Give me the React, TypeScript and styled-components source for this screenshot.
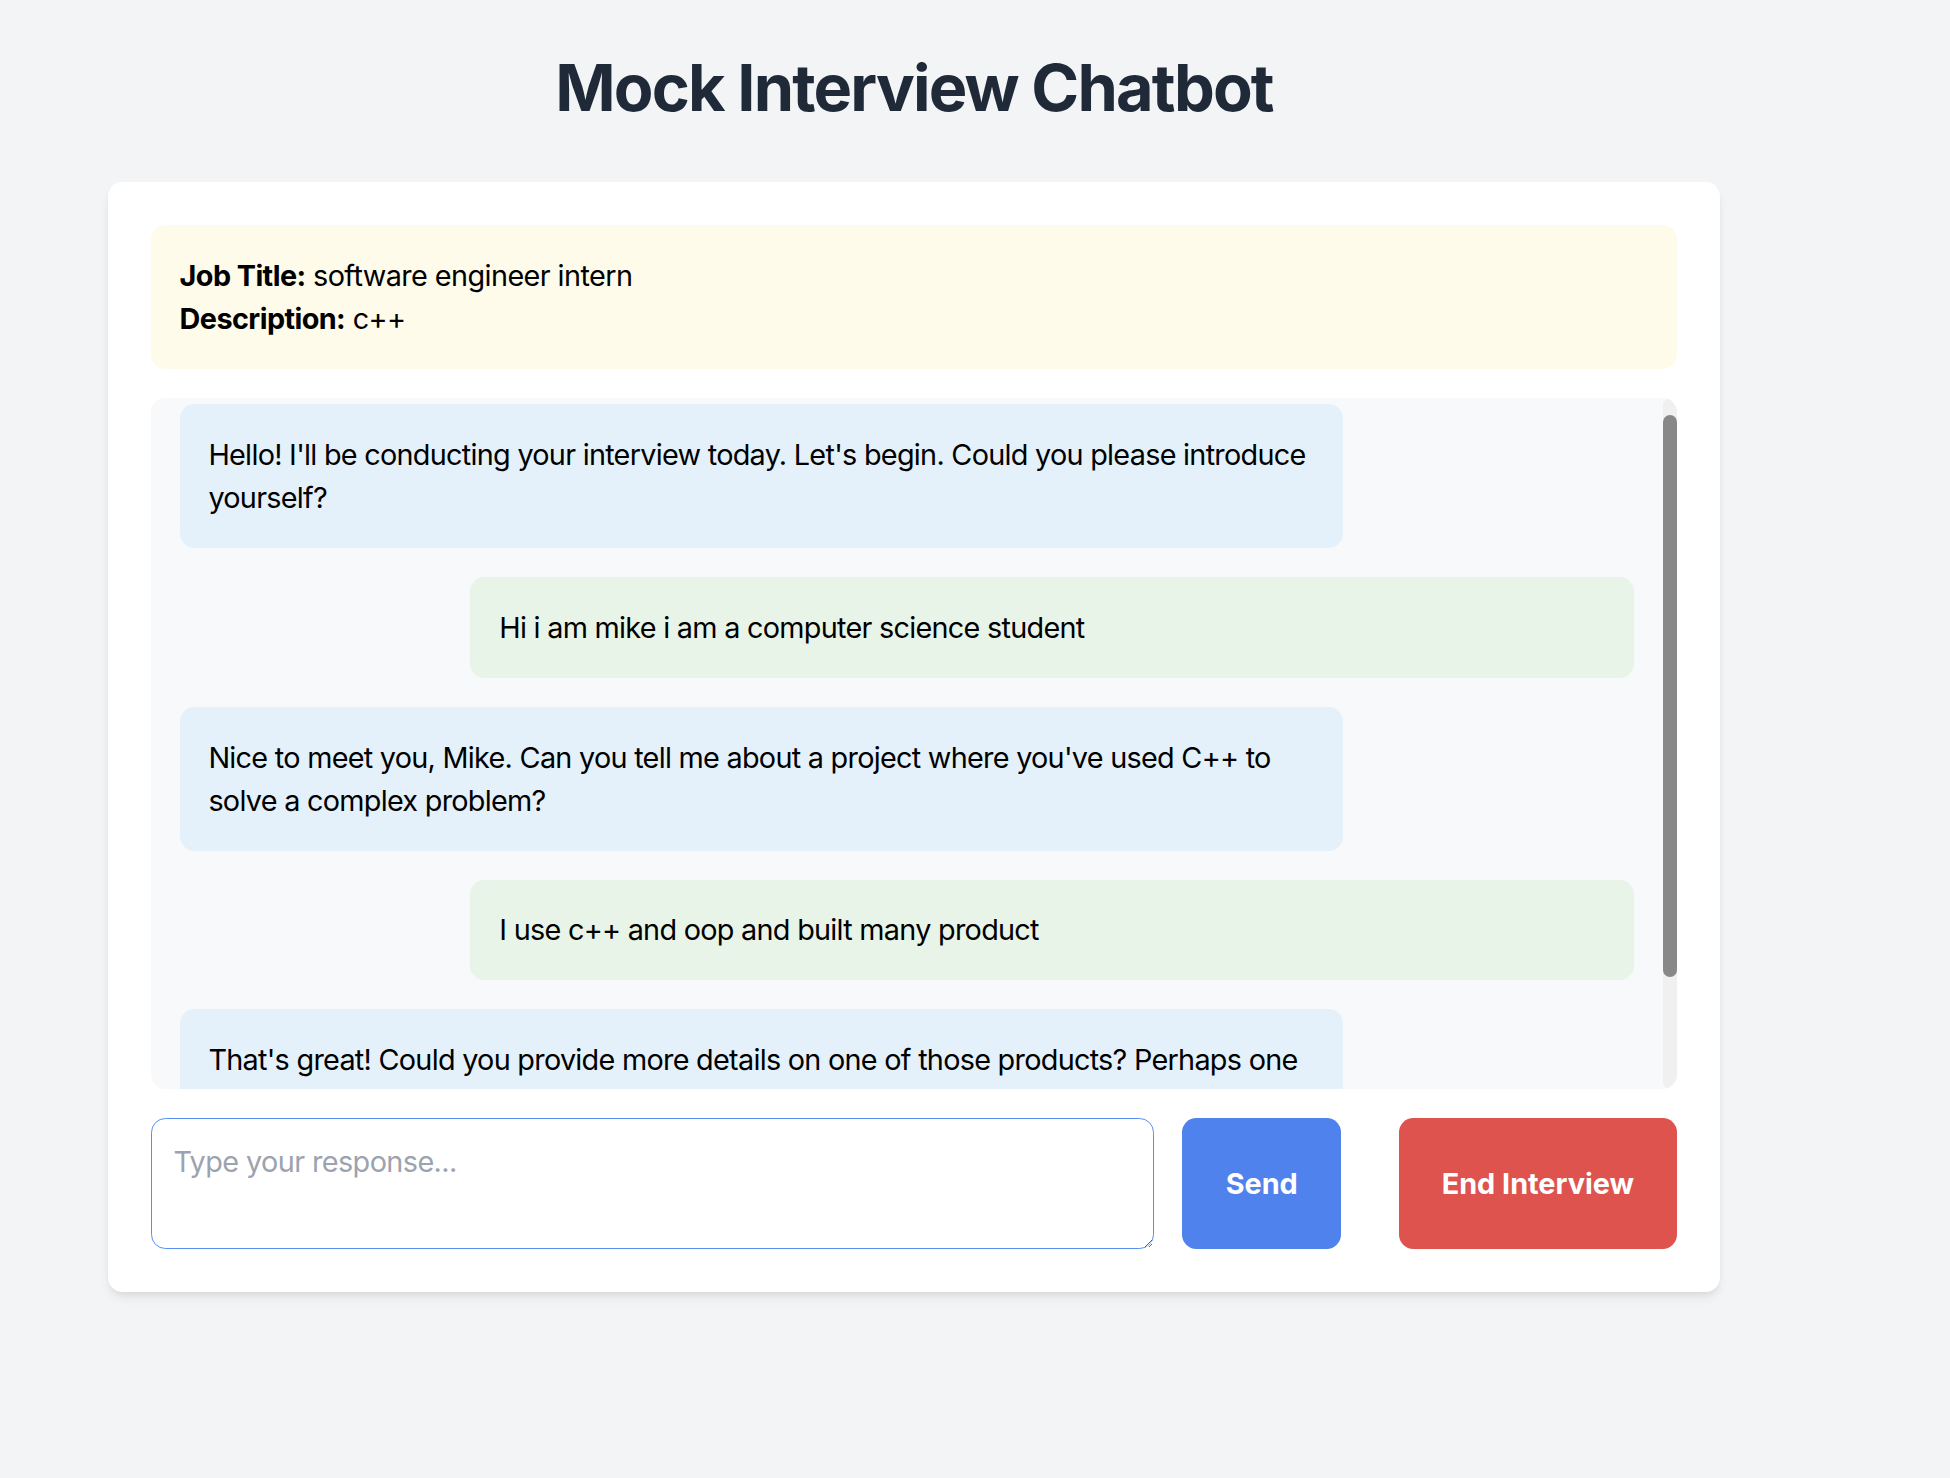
import React, { useLayoutEffect, useRef, useState } from "react";
import styled, { createGlobalStyle } from "styled-components";

const Global = createGlobalStyle`
  html, body {
    margin: 0;
    padding: 0;
    background: #f3f4f6;
    font-family: Inter, "Noto Sans", "Liberation Sans", sans-serif;
    color: #000;
  }
  * { box-sizing: border-box; }
`;

const Page = styled.div`
  width: 1828px;
  min-height: 1478px;
  padding-top: 52px;
  display: flex;
  flex-direction: column;
  align-items: center;
`;

const Title = styled.h1`
  margin: 0 0 57.6px 0;
  font-size: 64.8px;
  line-height: 72px;
  font-weight: 700;
  letter-spacing: -0.028em;
  color: #1f2937;
  text-align: center;
`;

const Card = styled.div`
  width: 1612.8px;
  background: #ffffff;
  border-radius: 14.4px;
  box-shadow: 0 7px 11px -2px rgba(0, 0, 0, 0.08), 0 3px 7px -3px rgba(0, 0, 0, 0.08);
  padding: 43.2px;
  display: flex;
  flex-direction: column;
`;

const JobInfo = styled.div`
  background: #fefbeb;
  border-radius: 14.4px;
  padding: 28.8px;
  margin-bottom: 28.8px;
  font-size: 28.8px;
  line-height: 43.2px;
  letter-spacing: -0.02em;
`;

const InfoLine = styled.div`
  white-space: nowrap;
`;

const Label = styled.strong`
  font-weight: 700;
`;

const ChatFrame = styled.div`
  height: 691.2px;
  display: flex;
  background: #f8f9fb;
  border-radius: 14.4px;
  overflow: hidden;
  margin-bottom: 28.8px;
`;

const ChatScroll = styled.div`
  flex: 1;
  min-width: 0;
  overflow-y: auto;
  scrollbar-width: none;
  padding: 28.8px;
  display: flex;
  flex-direction: column;
  gap: 28.8px;

  &::-webkit-scrollbar {
    display: none;
  }
`;

const Track = styled.div`
  width: 14.4px;
  flex-shrink: 0;
  background: #f0f0f0;
  border-radius: 7.2px;
  display: flex;
  flex-direction: column;
`;

const Thumb = styled.div`
  width: 100%;
  background: #888888;
  border-radius: 7.2px;
`;

const Bubble = styled.div<{ $user?: boolean }>`
  flex-shrink: 0;
  width: 80%;
  align-self: ${(p) => (p.$user ? "flex-end" : "flex-start")};
  background: ${(p) => (p.$user ? "#e9f4e9" : "#e4f1fb")};
  border-radius: 14.4px;
  padding: 28.8px;
  font-size: 28.8px;
  line-height: 43.2px;
  letter-spacing: -0.025em;
  color: #000;
`;

const InputRow = styled.div`
  display: flex;
  align-items: stretch;
  gap: 28.8px;
`;

const Input = styled.textarea`
  flex: 1;
  height: 131px;
  padding: 21.6px;
  border: 1.6px solid #5a8ef0;
  border-radius: 14.4px;
  font-family: Inter, "Noto Sans", "Liberation Sans", sans-serif;
  font-size: 28.8px;
  line-height: 43.2px;
  letter-spacing: -0.02em;
  color: #000;
  outline: none;
  background: #fff;

  &::placeholder {
    color: #9ca3af;
  }
`;

const Button = styled.button<{ $variant: "send" | "end" }>`
  border: none;
  border-radius: 14.4px;
  padding: 0 43.2px;
  font-family: Inter, "Noto Sans", "Liberation Sans", sans-serif;
  font-size: 28.8px;
  font-weight: 700;
  color: #ffffff;
  cursor: pointer;
  background: ${(p) => (p.$variant === "send" ? "#5082ee" : "#de534e")};
  margin-left: ${(p) => (p.$variant === "end" ? "28.8px" : "0")};
`;

const messages: { user: boolean; text: string }[] = [
  {
    user: false,
    text: "Hello! I'll be conducting your interview today. Let's begin. Could you please introduce yourself?",
  },
  { user: true, text: "Hi i am mike i am a computer science student" },
  {
    user: false,
    text: "Nice to meet you, Mike. Can you tell me about a project where you've used C++ to solve a complex problem?",
  },
  { user: true, text: "I use c++ and oop and built many product" },
  {
    user: false,
    text: "That's great! Could you provide more details on one of those products? Perhaps one where you applied object-oriented principles in C++. What was your role, and what challenges did you face along the way?",
  },
];

export default function App() {
  const chatRef = useRef<HTMLDivElement>(null);
  const [thumb, setThumb] = useState({ top: 16, height: 573 });

  useLayoutEffect(() => {
    const el = chatRef.current;
    if (!el) return;
    el.scrollTop = 22;
    const track = el.clientHeight;
    const ratio = el.clientHeight / el.scrollHeight;
    setThumb({
      top: (el.scrollTop / el.scrollHeight) * track,
      height: Math.min(track, ratio * track),
    });
  }, []);

  return (
    <>
      <Global />
      <Page>
        <Title>Mock Interview Chatbot</Title>
        <Card>
          <JobInfo>
            <InfoLine>
              <Label>Job Title:</Label> software engineer intern
            </InfoLine>
            <InfoLine>
              <Label>Description:</Label> c++
            </InfoLine>
          </JobInfo>
          <ChatFrame>
            <ChatScroll ref={chatRef}>
              {messages.map((m, i) => (
                <Bubble key={i} $user={m.user}>
                  {m.text}
                </Bubble>
              ))}
            </ChatScroll>
            <Track>
              <Thumb style={{ marginTop: thumb.top, height: thumb.height }} />
            </Track>
          </ChatFrame>
          <InputRow>
            <Input placeholder="Type your response..." />
            <Button $variant="send">Send</Button>
            <Button $variant="end">End Interview</Button>
          </InputRow>
        </Card>
      </Page>
    </>
  );
}
